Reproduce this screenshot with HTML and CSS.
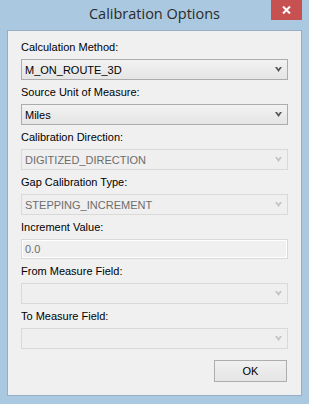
FILE: index.html
```html
<!DOCTYPE html>
<html>
<head>
<meta charset="utf-8">
<link rel="stylesheet" href="styles.css">
</head>
<body>
<div class="window">
  <div class="titlebar">
    <span class="title">Calibration Options</span>
    <div class="close">
      <svg width="9" height="8" viewBox="0 0 9 8"><path d="M1 0.5 L8 7.5 M8 0.5 L1 7.5" stroke="#fff" stroke-width="2"/></svg>
    </div>
  </div>
  <div class="panel">
    <div class="fields">
      <div class="field">
        <div class="label">Calculation Method:</div>
        <div class="combo"><span class="value">M_ON_ROUTE_3D</span><svg class="chev" width="7" height="5" viewBox="0 0 7 5"><path d="M0 0 H2 L3.5 2 L5 0 H7 L3.5 5 Z"/></svg></div>
      </div>
      <div class="field">
        <div class="label">Source Unit of Measure:</div>
        <div class="combo"><span class="value">Miles</span><svg class="chev" width="7" height="5" viewBox="0 0 7 5"><path d="M0 0 H2 L3.5 2 L5 0 H7 L3.5 5 Z"/></svg></div>
      </div>
      <div class="field">
        <div class="label">Calibration Direction:</div>
        <div class="combo disabled"><span class="value">DIGITIZED_DIRECTION</span><svg class="chev" width="7" height="5" viewBox="0 0 7 5"><path d="M0 0 H2 L3.5 2 L5 0 H7 L3.5 5 Z"/></svg></div>
      </div>
      <div class="field">
        <div class="label">Gap Calibration Type:</div>
        <div class="combo disabled"><span class="value">STEPPING_INCREMENT</span><svg class="chev" width="7" height="5" viewBox="0 0 7 5"><path d="M0 0 H2 L3.5 2 L5 0 H7 L3.5 5 Z"/></svg></div>
      </div>
      <div class="field">
        <div class="label">Increment Value:</div>
        <div class="textbox"><span class="value">0.0</span></div>
      </div>
      <div class="field">
        <div class="label">From Measure Field:</div>
        <div class="combo disabled"><span class="value"></span><svg class="chev" width="7" height="5" viewBox="0 0 7 5"><path d="M0 0 H2 L3.5 2 L5 0 H7 L3.5 5 Z"/></svg></div>
      </div>
      <div class="field">
        <div class="label">To Measure Field:</div>
        <div class="combo disabled"><span class="value"></span><svg class="chev" width="7" height="5" viewBox="0 0 7 5"><path d="M0 0 H2 L3.5 2 L5 0 H7 L3.5 5 Z"/></svg></div>
      </div>
    </div>
    <div class="buttons">
      <div class="btn">OK</div>
    </div>
  </div>
</div>
</body>
</html>
```
FILE: styles.css
```css
html, body {
  margin: 0;
  padding: 0;
}
.window {
  width: 309px;
  height: 404px;
  background: #aac8e0;
  display: flex;
  flex-direction: column;
  box-sizing: border-box;
  position: relative;
}
.titlebar {
  height: 30px;
  display: flex;
  justify-content: center;
  align-items: flex-start;
}
.title {
  font-family: "Open Sans", "Noto Sans", sans-serif;
  font-size: 14.5px;
  line-height: 20px;
  margin-top: 4px;
  color: #2b2b2b;
}
.close {
  position: absolute;
  top: 0;
  left: 271px;
  width: 31px;
  height: 20px;
  background: #c75050;
  display: flex;
  align-items: center;
  justify-content: center;
}
.close svg {
  display: block;
}
.panel {
  flex: 1;
  margin: 0 7px 8px 7px;
  border: 1px solid #97adc2;
  background: #f0f0f0;
  padding: 10px 13px 0 13px;
  display: flex;
  flex-direction: column;
}
.fields {
  display: flex;
  flex-direction: column;
  gap: 6px;
}
.field {
  display: flex;
  flex-direction: column;
  gap: 5px;
}
.label {
  font-family: "Liberation Sans", Arial, sans-serif;
  font-size: 11px;
  line-height: 13px;
  color: #000;
}
.combo {
  height: 21px;
  box-sizing: border-box;
  border: 1px solid #acacac;
  background: linear-gradient(#f2f2f2, #e5e5e5);
  display: flex;
  align-items: center;
  justify-content: space-between;
  padding: 0 5px 0 3px;
}
.value {
  font-family: "Liberation Sans", Arial, sans-serif;
  font-size: 11px;
  line-height: 13px;
  color: #000;
  padding-top: 1px;
}
.chev {
  display: block;
  fill: #555555;
}
.combo.disabled {
  border-color: #d9d9d9;
  background: #efefef;
}
.combo.disabled .value {
  color: #6d6d6d;
}
.combo.disabled .chev {
  fill: #c2c2c2;
}
.textbox {
  height: 20px;
  box-sizing: border-box;
  border: 1px solid #d9d9d9;
  box-shadow: inset 0 0 0 1px #ffffff;
  background: #f0f0f0;
  display: flex;
  align-items: center;
  padding: 0 3px;
}
.textbox .value {
  color: #6d6d6d;
}
.buttons {
  display: flex;
  justify-content: flex-end;
  margin-top: 11px;
  padding-right: 1px;
}
.btn {
  width: 73px;
  height: 22px;
  box-sizing: border-box;
  border: 1px solid #adadad;
  background: linear-gradient(#f0f0f0, #e5e5e5);
  font-family: "Liberation Sans", Arial, sans-serif;
  font-size: 11px;
  line-height: 13px;
  color: #000;
  display: flex;
  align-items: center;
  justify-content: center;
}
```
